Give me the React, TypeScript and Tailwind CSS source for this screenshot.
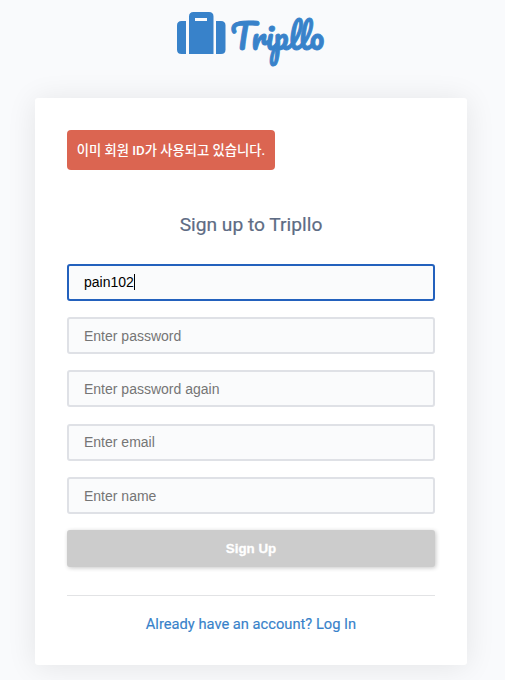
import React from "react";

const fieldBase =
  "block h-[37px] w-full rounded-[3px] border-2 bg-[#fafbfc] px-[15px] font-['Liberation_Sans',Arial,sans-serif] text-[14px] text-black outline-none placeholder:text-[#757575]";

function Logo() {
  return (
    <div className="ml-[177px] flex h-[98px] items-start pt-3 text-[#3882ca]">
      <svg width="49" height="42" viewBox="0 0 49 42" fill="currentColor" aria-hidden="true">
        <path d="M9 9v33H4.500Q0 42 0 37.500V13.500Q0 9 4.500 9Z" />
        <path fillRule="evenodd" d="M12 42V4.500Q12 0 16.500 0H32Q36.500 0 36.500 4.500V42ZM18 6v3h12V6Z" />
        <path d="M39 9h5Q48.500 9 48.500 13.500v24Q48.500 42 44 42h-5Z" />
      </svg>
      <svg width="100" height="60" className="ml-[3px] overflow-visible" aria-label="Tripllo">
        <text
          x="1.500"
          y="38"
          textLength="93.500"
          lengthAdjust="spacingAndGlyphs"
          fill="currentColor"
          stroke="currentColor"
          strokeWidth="0.9"
          className="font-['Pacifico','Lato',cursive] text-[34px]"
        >
          Tripllo
        </text>
      </svg>
    </div>
  );
}

export default function App() {
  return (
    <div className="h-[680px] w-[505px] overflow-hidden bg-[#f9fafc] font-['Roboto','Noto_Sans_CJK_KR',sans-serif]">
      <Logo />
      <main className="ml-[35px] h-[567px] w-[432px] rounded-[3px] bg-white px-8 pt-8 shadow-[0_2px_30px_rgba(0,0,0,0.09)]">
        <div className="flex h-10 w-[208px] items-center justify-center rounded-[4px] bg-[#db6551] pt-px text-[13.300px] font-medium whitespace-nowrap text-white">
          이미 회원 ID가 사용되고 있습니다.
        </div>
        <h1 className="mt-[41px] h-[53px] text-center text-[19.200px] leading-[28px] text-[#5e6c84] [-webkit-text-stroke:0.2px_#5e6c84]">
          Sign up to Tripllo
        </h1>
        <form>
          <div className="relative">
            <input className={`${fieldBase} border-[#2361bd] pb-px`} defaultValue="pain102" />
            <span className="absolute top-[10px] left-[67px] h-4 w-px bg-black" />
          </div>
          <input className={`${fieldBase} mt-4 border-[#dfe1e6] pt-px`} placeholder="Enter password" />
          <input className={`${fieldBase} mt-4 border-[#dfe1e6] pt-px`} placeholder="Enter password again" />
          <input className={`${fieldBase} mt-[17px] border-[#dfe1e6] pb-px`} placeholder="Enter email" />
          <input className={`${fieldBase} mt-4 border-[#dfe1e6] pt-px`} placeholder="Enter name" />
          <button
            type="button"
            className="mt-4 block h-[37px] w-full rounded-[3px] bg-[#cccccc] font-['Liberation_Sans',Arial,sans-serif] text-[13.333px] font-bold text-white shadow-[1px_1px_4px_rgba(0,0,0,0.22)] [-webkit-text-stroke:0.3px_white]"
          >
            Sign Up
          </button>
        </form>
        <div className="mt-7 border-t border-[#e2e3e5] pt-[17px] text-center text-[14.700px] leading-[22px] text-[#3882ca] [-webkit-text-stroke:0.15px_#3882ca]">
          <a>Already have an account? Log In</a>
        </div>
      </main>
    </div>
  );
}
